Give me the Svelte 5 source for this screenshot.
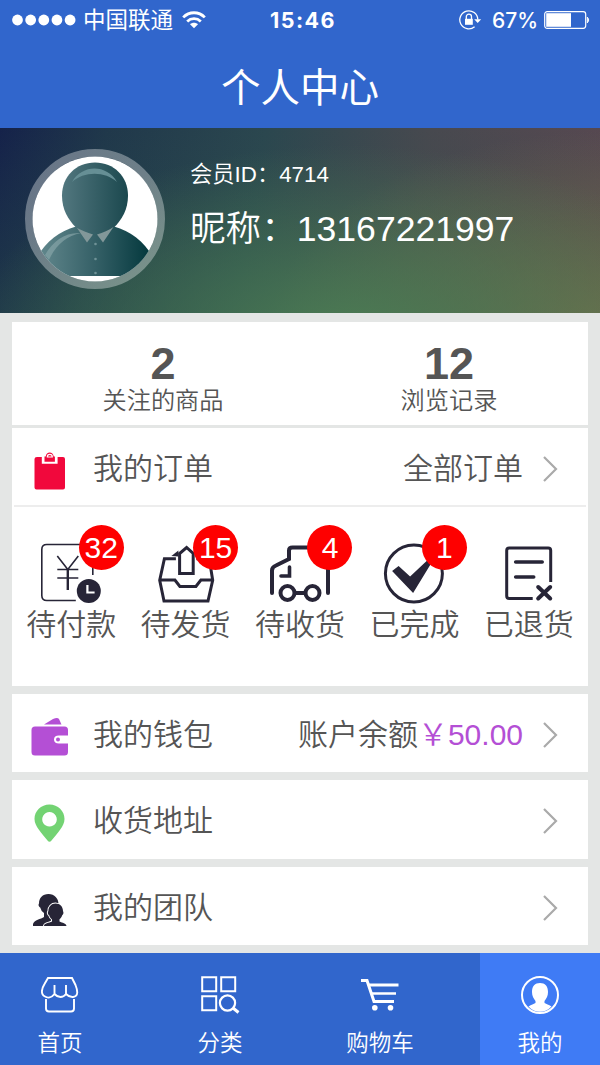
<script>
  const stats = [
    { value: '2', label: '关注的商品' },
    { value: '12', label: '浏览记录' }
  ];
  const orders = [
    { icon: 'pay', label: '待付款', count: 32 },
    { icon: 'box', label: '待发货', count: 15 },
    { icon: 'truck', label: '待收货', count: 4 },
    { icon: 'done', label: '已完成', count: 1 },
    { icon: 'back', label: '已退货', count: 0 }
  ];
  const rows = [
    { icon: 'wallet', label: '我的钱包', note: '账户余额', amount: '￥50.00' },
    { icon: 'pin', label: '收货地址' },
    { icon: 'team', label: '我的团队' }
  ];
  const tabs = [
    { icon: 'home', label: '首页' },
    { icon: 'grid', label: '分类' },
    { icon: 'cart', label: '购物车' },
    { icon: 'me', label: '我的', active: true }
  ];
</script>

{#snippet chevron()}
  <svg class="chevron" width="16" height="28" viewBox="0 0 16 28"><path d="M2 2 14 14 2 26" fill="none" stroke="#aaa" stroke-width="2.2" /></svg>
{/snippet}

<div class="page">
  <header>
    <div class="status">
      <div class="left">
        <svg width="64" height="12" viewBox="0 0 64 12" fill="#fff">
          {#each [0, 1, 2, 3, 4] as i}<circle cx={5.5 + i * 13.15} cy="6" r="5.4" />{/each}
        </svg>
        <span class="carrier">中国联通</span>
        <svg width="24" height="18" viewBox="0 0 24 18" fill="none" stroke="#fff" stroke-width="2.8">
          <path d="M1.2 6.4C7.2.2 16.8.2 22.8 6.4" /><path d="M5.2 10.4c3.8-3.6 9.8-3.6 13.6 0" />
          <path d="M12 17.2 8 13.3c2.3-2 5.7-2 8 0Z" fill="#fff" stroke="none" />
        </svg>
      </div>
      <span class="time">15:46</span>
      <div class="right">
        <svg width="23" height="20" viewBox="0 0 23 20" fill="none" stroke="#fff">
          <path d="M15.6 16.7A9 9 0 1 1 18.8 9.5" stroke-width="1.3" />
          <path d="M15.2 9.3h7L18.7 13Z" fill="#fff" stroke="none" />
          <path d="M7.3 9V6.8a2.6 2.6 0 0 1 5.2 0V9" stroke-width="1.3" />
          <path d="M6 8.800h7.800v6H6Z" fill="#fff" stroke="none" />
        </svg>
        <span class="percent">67%</span>
        <svg width="46" height="18" viewBox="0 0 46 18">
          <rect x=".7" y=".7" width="41" height="16.6" rx="2.5" fill="none" stroke="#fff" stroke-width="1.2" />
          <path d="M2.2 2.2H27v13.600H2.2Z" fill="#fff" /><path d="M43.300 6q3 3 0 6Z" fill="#fff" stroke="#fff" stroke-width=".8" />
        </svg>
      </div>
    </div>
    <h1>个人中心</h1>
  </header>

  <section class="banner">
    <svg class="avatar" width="140" height="140" viewBox="0 0 140 140">
      <defs>
        <linearGradient id="head"><stop offset="0" stop-color="#52777f" /><stop offset="1" stop-color="#1b484e" /></linearGradient>
        <linearGradient id="body"><stop offset="0" stop-color="#688d92" /><stop offset=".5" stop-color="#356067" /><stop offset=".9" stop-color="#073b40" /></linearGradient>
        <clipPath id="round"><circle cx="70" cy="70" r="62.5" /></clipPath>
      </defs>
      <circle cx="70" cy="70" r="66.2" fill="none" stroke="#fff" stroke-opacity=".34" stroke-width="7.6" />
      <circle cx="70" cy="70" r="62.5" fill="#fff" />
      <g clip-path="url(#round)">
        <path d="M6 127C10 102 28 84 51 77.500h38c23 6.500 41 24.500 45 49.500Z" fill="url(#body)" />
        <path d="M70 13.500c19 0 33 14 33 33 0 14-6 24-14 32-8 7-30 7-38 0-8-8-14-18-14-32 0-19 14-33 33-33Z" fill="url(#head)" />
        <path d="M47 33c10-18 35-18 45 0-12-11-33-11-45 0Z" fill="#668f95" />
        <path d="M24 111c6-14 17-24 32-27-16-1-28 8-36 22Z" fill="#8ba8ab" fill-opacity=".65" />
        <path d="m52 79 10 14.5 6-8c-6-2-11-4-16-6.500ZM88.500 78 78 93.500l-6-8c6-2 12-4 16.500-7.500Z" fill="#829799" />
        <g fill="#6f9297"><circle cx="70.500" cy="95" r="1.3" /><circle cx="70.500" cy="110" r="1.3" /><circle cx="70.500" cy="124" r="1.3" /></g>
      </g>
    </svg>
    <div class="who">
      <p class="uid">会员ID：4714</p>
      <p class="nick">昵称：13167221997</p>
    </div>
  </section>

  <main>
    <section class="card stats">
      {#each stats as s}
        <div class="stat"><b>{s.value}</b><span>{s.label}</span></div>
      {/each}
    </section>

    <section class="card orders">
      <div class="row">
        <svg class="icon" width="40" height="40" viewBox="30 450 40 40">
          <path d="M37 457h4.800v6.800h15.800V457H63q2 0 2 2v28.500q0 2-2 2H36.500q-2 0-2-2V459q0-2 2.500-2Z" fill="#f1083c" />
          <path d="M44.500 456.500h1.200c.5-5.500 7.500-5.500 8 0h1.200v5.300H44.500Z" fill="#f1083c" /><path d="M47.300 457c0-3.600 5-3.600 5 0Z" fill="#f1083c" stroke="#fff" stroke-width="1.200" />
        </svg>
        <span class="label">我的订单</span>
        <span class="note">全部订单</span>
        {@render chevron()}
      </div>
      <div class="kinds">
        {#each orders as o, i}
          <div class="kind">
            <div class="pic">
              <svg width="64" height="64" viewBox="{39.2 + i * 114.4} 541 64 64" fill="none" stroke="#272537">
                {#if o.icon === 'pay'}
                  <path d="M76 600.500H47q-5 0-5-5v-46q0-5 5-5h41q5 0 5 5V575" stroke-width="1.600" />
                  <path d="m57.500 556 10.500 13.500L78.500 556M57.500 569.500h21M57.500 578h21" stroke-width="1.600" /><path d="M68 569.500V590" stroke-width="2.400" />
                  <circle cx="89" cy="591" r="12" fill="#272537" stroke="none" /><path d="M87.600 585v7.500h7.200" stroke="#fff" stroke-width="2.200" />
                {:else if o.icon === 'box'}
                  <path d="M175.500 558.800H164l-4.700 21.500 4.300 20.700h44l4.700-20.700-3.500-21.500H196M159 580h15.500l5 6.500h16l5-6.500H213" stroke-width="3" />
                  <path d="M179.200 573.500v-20l7-6 6.600 6v20Z" fill="#fff" stroke-width="3" /><path d="m171 556 7-5.500v6Z" fill="#272537" stroke="none" />
                {:else if o.icon === 'truck'}
                  <path d="M272 593v-22.500q0-3.500 4-5l13-6.500v-8.500q0-3 3.500-3H324q4 0 4 4V593" stroke-width="4" stroke-linecap="round" />
                  <path d="M289.500 567v9H281" stroke-width="3.600" stroke-linecap="round" />
                  <path d="M295 593h10.500" stroke-width="4" /><circle cx="287.500" cy="593" r="7" stroke-width="4" /><circle cx="312.500" cy="593" r="7" stroke-width="4" />
                {:else if o.icon === 'done'}
                  <circle cx="414.300" cy="573.500" r="28.500" stroke-width="3" />
                  <path d="m392.500 571 6.500-5 11.500 10.500L427 561h6l-19.500 32Z" fill="#272537" stroke="none" />
                {:else}
                  <path d="M532.500 598.500H509q-2.500 0-2.500-2.500v-45.500q0-2.500 2.500-2.500h39q2.500 0 2.500 2.500V582" stroke-width="3" />
                  <path d="M515.500 562h26.500M515.500 577h18" stroke-width="3.600" stroke-linecap="round" /><path d="m538 587 12 11.500M550 587l-12 11.500" stroke-width="4" stroke-linecap="round" />
                {/if}
              </svg>
              {#if o.count}<span class="badge">{o.count}</span>{/if}
            </div>
            <span>{o.label}</span>
          </div>
        {/each}
      </div>
    </section>

    {#each rows as r}
      <section class="card row">
        <svg class="icon" width="40" height="40" viewBox="0 0 40 40">
          {#if r.icon === 'wallet'}
            <path d="M5 10.500h29.500q3.500 0 3.500 3.500v5.500h-9q-5 0-5 4t5 4h9v8.500q0 3.500-3.500 3.500H5q-3.500 0-3.500-3.500V14q0-3.500 3.500-3.500Z" fill="#b44fd5" />
            <circle cx="28" cy="23.500" r="2" fill="#b44fd5" /><path d="m14 8.500 9-5.500q4.500-2.200 6 0l2.500 5.500Z" fill="#b44fd5" />
          {:else if r.icon === 'pin'}
            <path fill-rule="evenodd" d="M19.500 2.500c8.500 0 15 6.500 15 14.500 0 7-7 14-13 21.500q-2 2.500-4 0C11.500 31 4.500 24 4.500 17c0-8 6.500-14.500 15-14.500Zm0 7.500a7.300 7.300 0 1 0 .01 0Z" fill="#73d373" />
          {:else}
            <path d="M18.500 5c6 0 10 4.500 10 10 0 2-.3 5-1.500 7l-4 4v4q3 3 6 4v3H3V35c1-4 8-5 11-7v-4q-3-2-3.800-5.500C8 17 8.500 15 9 14.500 9 9 12.500 5 18.500 5Z" fill="#272537" />
            <path d="M25.500 14.500c4.800 0 7.500 3.500 7.500 7.500 1 2 .3 3.500-.8 4.200-.5 1.800-1.500 3-2.700 4v2.300c3 1.500 6.500 1.500 7 4.500H14c0-3 5-3 8-4.500v-2.300c-1.500-1-2.300-2.300-2.800-4-1.500-.8-1.800-2.500-.8-4.200 0-4.300 3-7.500 7.100-7.500Z" fill="#272537" stroke="#fff" stroke-width="2" paint-order="stroke" />
          {/if}
        </svg>
        <span class="label">{r.label}</span>
        {#if r.note}<span class="note">{r.note}<em>{r.amount}</em></span>{/if}
        {@render chevron()}
      </section>
    {/each}
  </main>

  <nav>
    {#each tabs as t}
      <div class="tab" class:active={t.active}>
        <svg width="40" height="40" viewBox="0 0 40 40" fill="none" stroke="#fff">
          {#if t.icon === 'home'}
            <path d="M8 3h24l3.500 7c2 5 3.500 11-2.500 12-3 .3-5-1-7-3-3 4-8 4-11.500 0-3 4-7 4-9.500 2.500C0 19 2 13 4.500 9ZM14.500 19V10M26 19V10M6 24v9.500q0 3 3 3h22q3 0 3-3V24" stroke-width="1.900" />
          {:else if t.icon === 'grid'}
            <path d="M2.200 2.200h14v14h-14ZM21.200 2.200h14v14h-14ZM2.200 21.200h14v14h-14Z" stroke-width="2" /><circle cx="27.500" cy="28" r="7.600" stroke-width="2.200" /><path d="m33 33 5.500 4.500" stroke-width="3" />
          {:else if t.icon === 'cart'}
            <path d="M1 5.500h6L14 26.500h20" stroke-width="3" /><path d="M8.500 10H38.500" stroke-width="3" /><path d="M11 18.500h25" stroke-width="2.500" />
            <circle cx="14.800" cy="32.800" r="2.800" fill="#fff" stroke="none" /><circle cx="30.500" cy="32.800" r="2.800" fill="#fff" stroke="none" />
          {:else}
            <circle cx="20" cy="20" r="18" stroke-width="2" />
            <path d="M20 8c5 0 8 3 8 9 0 4-1.500 6.500-3.500 9v2c2 1.500 4 1.300 7 3.500-6 7-17 7-23 0 3-2.200 5-2 7-3.500v-2c-2-2.500-3.500-5-3.500-9 0-6 3-9 8-9Z" fill="#fff" stroke="none" />
          {/if}
        </svg>
        <span>{t.label}</span>
      </div>
    {/each}
  </nav>
</div>

<style>
  :global(body) { margin: 0; }
  .page {
    width: 600px; height: 1065px; display: flex; flex-direction: column; overflow: hidden;
    background: #e4e6e5; color: #555; font-family: 'Liberation Sans', 'Noto Sans CJK SC', sans-serif; font-weight: 350;
  }
  h1, p { margin: 0; font-weight: inherit; }
  svg { display: block; flex: none; }
  span, b { white-space: nowrap; }
  header { height: 128px; background: #3166cc; color: #fff; }
  .status { height: 38px; display: grid; grid-template-columns: 1fr auto 1fr; align-items: center; padding: 0 10px 0 12px; }
  .left, .right { display: flex; align-items: center; }
  .carrier { font-size: 22.5px; line-height: 38px; margin: 2px 9px 0 7px; font-weight: 400; }
  .time { font: 700 21.500px/38px Inter, sans-serif; letter-spacing: 1.500px; padding-left: 4px; }
  .right { justify-content: flex-end; }
  .percent { font: 500 21px/38px Inter, sans-serif; margin: 1px 6px 0 10px; }
  h1 { font-size: 39.500px; line-height: 58px; padding-top: 21px; text-align: center; font-weight: 400; }
  .banner {
    height: 185px; flex: none; display: flex; box-sizing: border-box; padding: 21px 25px; color: #fff;
    background:
      radial-gradient(ellipse 380px 190px at 58% 112%, rgba(76, 126, 84, .95), rgba(70, 114, 79, 0)),
      radial-gradient(ellipse 330px 200px at 100% 110%, rgba(122, 118, 74, .8), rgba(112, 112, 78, 0)),
      linear-gradient(180deg, rgba(40, 80, 72, 0) 0%, rgba(40, 80, 72, .4)),
      linear-gradient(100deg, #15224a 0%, #20384b 17%, #2b474f 42%, #47494f 68%, #594851 100%);
  }
  .who { padding-left: 25px; }
  .uid { font-size: 22.300px; line-height: 32px; padding-top: 10px; }
  .nick { font-size: 35.600px; line-height: 50px; padding-top: 13px; }
  main { flex: 1; padding: 9px 12px 0; display: flex; flex-direction: column; gap: 8px; }
  .card { background: #fff; }
  .stats { height: 103px; display: grid; grid-template-columns: 286px 286px; padding-left: 8px; margin-bottom: -5px; }
  .stat { display: flex; flex-direction: column; align-items: center; }
  .stat b { font-size: 45px; line-height: 50px; padding-top: 17px; font-weight: 700; }
  .stat span { font-size: 24.200px; line-height: 24px; }
  .row { height: 78.300px; display: flex; align-items: center; box-sizing: border-box; padding: 0 30px 0 18px; }
  .orders { height: 258px; }
  .orders .row { border-bottom: 2px solid #ededed; height: 79px; margin: 0 2px; padding: 0 28px 0 16px; }
  .icon { position: relative; top: 3px; }
  .label { font-size: 30px; padding: 0 0 2px 23px; flex: 1; }
  .note { font-size: 30px; padding: 0 19px 2px 0; }
  .chevron { position: relative; top: 2px; }
  em { font-style: normal; color: #b44fd5; }
  .kinds { display: grid; grid-template-columns: repeat(5, 1fr); padding: 34px 2px 0; }
  .kind { display: flex; flex-direction: column; align-items: center; font-size: 30px; line-height: 40px; }
  .pic { position: relative; }
  .badge {
    position: absolute; left: 39.500px; top: -16px; width: 45px; height: 45px; border-radius: 50%;
    background: #fe0000; color: #fff; text-align: center; line-height: 46px;
  }
  nav { height: 112px; flex: none; display: flex; justify-content: space-between; background: #3166cc; color: #fff; }
  .tab { width: 120px; display: flex; flex-direction: column; align-items: center; padding-top: 22px; font-size: 22.500px; line-height: 32px; gap: 13px; box-sizing: border-box; }
  .active { background: #3f7bf5; }
</style>
